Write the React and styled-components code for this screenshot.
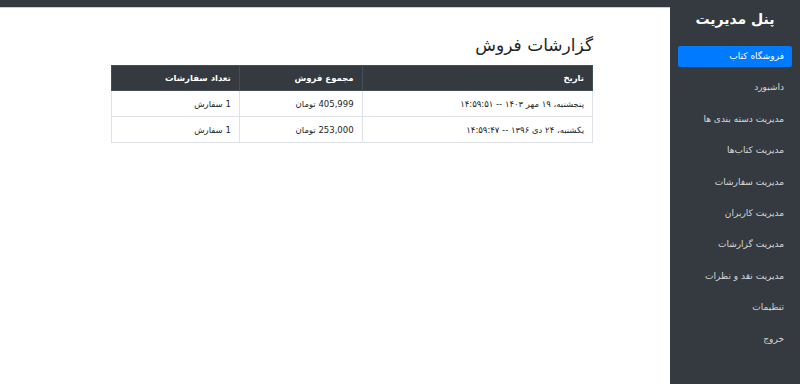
import React from "react";
import styled, { createGlobalStyle } from "styled-components";

const Global = createGlobalStyle`
  html, body { margin: 0; padding: 0; background: #fff; }
  body { font-family: "DejaVu Sans", "Noto Sans", sans-serif; }
  * { box-sizing: border-box; }
`;

const Layout = styled.div`
  direction: rtl;
  display: flex;
  width: 800px;
  height: 384px;
  overflow: hidden;
`;

const Sidebar = styled.aside`
  width: 130px;
  flex-shrink: 0;
  background: #343a40;
  padding: 8px 8px 0 8px;
  display: flex;
  flex-direction: column;
`;

const Brand = styled.h2`
  margin: 0 0 12px 0;
  height: 26px;
  line-height: 22px;
  text-align: center;
  color: #fff;
  font-size: 14px;
  font-weight: bold;
`;

const Nav = styled.nav`
  display: flex;
  flex-direction: column;
  gap: 10.4px;
`;

const NavItem = styled.a`
  display: block;
  height: 21px;
  line-height: 21px;
  padding: 0 8px;
  font-size: 9px;
  border-radius: 2px;
  text-decoration: none;
  color: ${(p) => (p.$active ? "#fff" : "rgba(255,255,255,0.8)")};
  background: ${(p) => (p.$active ? "#007bff" : "transparent")};
`;

const Main = styled.main`
  flex: 1;
  display: flex;
  flex-direction: column;
`;

const TopBar = styled.div`
  height: 8px;
  background: #343a40;
  border-bottom: 1px solid #c9ced3;
`;

const Content = styled.div`
  padding: 25px 77px 0 0;
`;

const Title = styled.h1`
  margin: 0 0 7px 0;
  font-size: 17px;
  font-weight: 500;
  color: #212529;
  line-height: 25px;
`;

const Table = styled.table`
  width: 482px;
  border-collapse: collapse;
  font-size: 8.5px;
  color: #212529;
`;

const Th = styled.th`
  background: #343a40;
  color: #fff;
  font-weight: bold;
  text-align: right;
  height: 25px;
  padding: 0 8px;
  border: 1px solid #454d55;
  width: ${(p) => p.$w}px;
`;

const Td = styled.td`
  text-align: right;
  height: 26px;
  padding: 0 8px;
  border: 1px solid #dee2e6;
`;

const navItems = [
  "فروشگاه کتاب",
  "داشبورد",
  "مدیریت دسته بندی ها",
  "مدیریت کتاب‌ها",
  "مدیریت سفارشات",
  "مدیریت کاربران",
  "مدیریت گزارشات",
  "مدیریت نقد و نظرات",
  "تنظیمات",
  "خروج",
];

const rows = [
  ["پنجشنبه، ۱۹ مهر ۱۴۰۳ -- ۱۴:۵۹:۵۱", "405,999 تومان", "1 سفارش"],
  ["یکشنبه، ۲۴ دی ۱۳۹۶ -- ۱۴:۵۹:۴۷", "253,000 تومان", "1 سفارش"],
];

export default function App() {
  return (
    <>
      <Global />
      <Layout>
        <Sidebar>
          <Brand>پنل مدیریت</Brand>
          <Nav>
            {navItems.map((t, i) => (
              <NavItem key={t} $active={i === 0} href="#">
                {t}
              </NavItem>
            ))}
          </Nav>
        </Sidebar>
        <Main>
          <TopBar />
          <Content>
            <Title>گزارشات فروش</Title>
            <Table>
              <thead>
                <tr>
                  <Th $w={231}>تاریخ</Th>
                  <Th $w={123}>مجموع فروش</Th>
                  <Th $w={128}>تعداد سفارشات</Th>
                </tr>
              </thead>
              <tbody>
                {rows.map((r) => (
                  <tr key={r[0]}>
                    {r.map((c, j) => (
                      <Td key={j}>{c}</Td>
                    ))}
                  </tr>
                ))}
              </tbody>
            </Table>
          </Content>
        </Main>
      </Layout>
    </>
  );
}
